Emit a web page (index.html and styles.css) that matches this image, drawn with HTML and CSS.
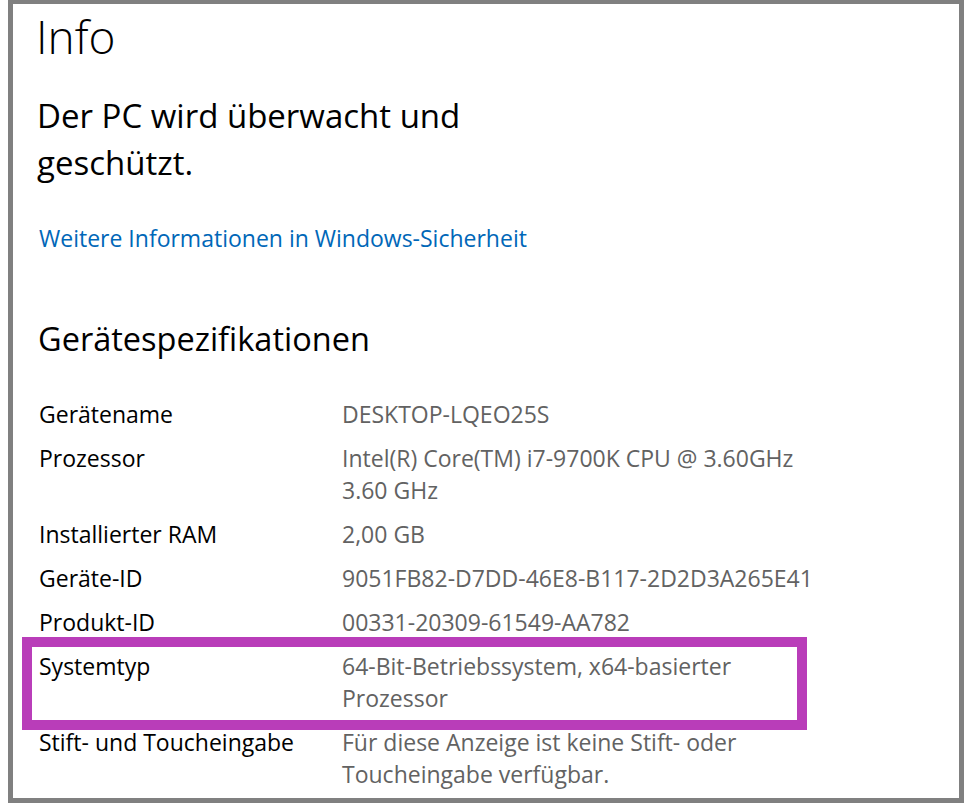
FILE: index.html
```html
<!DOCTYPE html>
<html lang="de">
<head>
    <meta charset="UTF-8">
    <meta name="viewport" content="width=device-width, initial-scale=1.0">
    <title>Info</title>
    <link rel="stylesheet" href="styles.css">
</head>
<body>
    <div class="frame">
        <h1>Info</h1>
        <p class="status">Der PC wird überwacht und geschützt.</p>
        <a class="more-link" href="#">Weitere Informationen in Windows-Sicherheit</a>

        <h2>Gerätespezifikationen</h2>
        <div class="specs">
            <div class="spec-label">Gerätename</div>
            <div class="spec-value">DESKTOP-LQEO25S</div>

            <div class="spec-label">Prozessor</div>
            <div class="spec-value">Intel(R) Core(TM) i7-9700K CPU @ 3.60GHz 3.60 GHz</div>

            <div class="spec-label">Installierter RAM</div>
            <div class="spec-value">2,00 GB</div>

            <div class="spec-label">Geräte-ID</div>
            <div class="spec-value">9051FB82-D7DD-46E8-B117-2D2D3A265E41</div>

            <div class="spec-label">Produkt-ID</div>
            <div class="spec-value">00331-20309-61549-AA782</div>

            <div class="spec-label">Systemtyp</div>
            <div class="spec-value">64-Bit-Betriebssystem, x64-basierter Prozessor</div>

            <div class="spec-label">Stift- und Toucheingabe</div>
            <div class="spec-value">Für diese Anzeige ist keine Stift- oder Toucheingabe verfügbar.</div>
        </div>

        <!-- Markierung um den Systemtyp -->
        <div class="highlight"></div>
    </div>
</body>
</html>
```

FILE: styles.css
```css
body {
    margin: 0;
    background: white;
    font-family: "Open Sans", "Noto Sans", sans-serif;
    color: #000;
}

.frame {
    position: relative;
    margin: 0 0 2px 8px;
    height: 794px;
    border: 5px solid #808080;
    border-top-width: 4px;
    padding: 0 0 0 26px;
    overflow: hidden;
    box-sizing: content-box;
}

h1 {
    font-weight: 300;
    font-size: 46px;
    line-height: 60px;
    margin: 2px 0 0 -3px;
}

.status {
    font-size: 33px;
    line-height: 47px;
    max-width: 470px;
    margin: 26px 0 0 -2px;
}

.more-link {
    display: inline-block;
    margin-top: 36px;
    color: #0067b8;
    text-decoration: none;
    font-size: 23px;
    line-height: 32px;
}

h2 {
    font-weight: 400;
    font-size: 32.5px;
    line-height: 40px;
    margin: 65px 0 0 -1px;
}

.specs {
    display: grid;
    grid-template-columns: 303px 480px;
    row-gap: 12px;
    margin-top: 39px;
    font-size: 23px;
    line-height: 32px;
}

.spec-value {
    color: #626262;
}

.highlight {
    position: absolute;
    left: 9px;
    top: 633px;
    width: 785px;
    height: 93px;
    border: 10px solid #b93db9;
    box-sizing: border-box;
}
```
